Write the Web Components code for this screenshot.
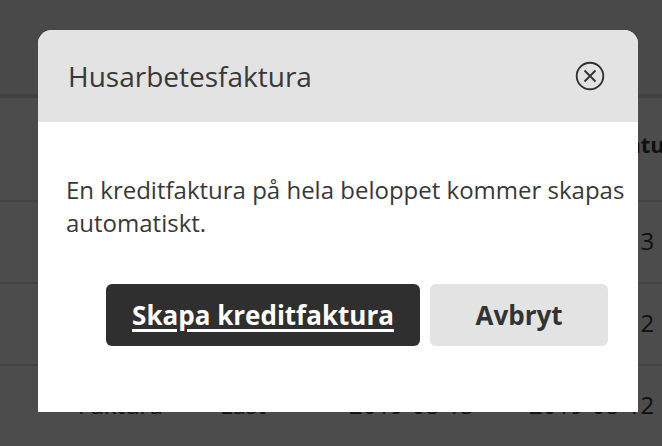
<!DOCTYPE html>
<html lang="sv">
<head>
<meta charset="utf-8">
<title>Husarbetesfaktura</title>
<style>
  html, body { margin: 0; height: 100%; overflow: hidden; background: #fff; }
  body { font-family: "Open Sans", "Noto Sans", sans-serif; color: #383838; }
</style>
</head>
<body>
<x-table>
  <x-row head><span></span><span></span><span></span><span>Förfallodatum</span></x-row>
  <x-row><span>Faktura</span><span>Last</span><span>2019-08-13</span><span>2019-08-13</span></x-row>
  <x-row><span>Faktura</span><span>Last</span><span>2019-08-13</span><span>2019-08-12</span></x-row>
  <x-row><span>Faktura</span><span>Last</span><span>2019-08-13</span><span>2019-08-12</span></x-row>
</x-table>

<x-modal>
  <span slot="title">Husarbetesfaktura</span>
  En kreditfaktura på hela beloppet kommer skapas automatiskt.
  <x-button slot="actions" primary>Skapa kreditfaktura</x-button>
  <x-button slot="actions">Avbryt</x-button>
</x-modal>

<script>
class Table extends HTMLElement {
  constructor() {
    super();
    this.attachShadow({ mode: 'open' });
    this.shadowRoot.innerHTML = `
      <style>
        :host {
          display: block;
          width: 662px;
          overflow: hidden;
        }
        .top {
          height: 94px;
          background: #f4f4f4;
          border-bottom: 4px solid #dcdcdc;
        }
      </style>
      <div class='top'></div>
      <slot></slot>
    `;
  }
}

class Row extends HTMLElement {
  constructor() {
    super();
    this.attachShadow({ mode: 'open' });
    this.shadowRoot.innerHTML = `
      <style>
        :host {
          display: grid;
          grid-template-columns: 142px 129px 180px 180px;
          padding: 0 0 3px 78px;
          box-sizing: border-box;
          width: 740px;
          height: 82px;
          align-items: center;
          border-bottom: 2px solid #e2e2e2;
          font-size: 24px;
          white-space: nowrap;
        }
        :host([head]) {
          height: 104px;
          padding-bottom: 10px;
          font-weight: 700;
          font-size: 22px;
        }
      </style>
      <slot></slot>
    `;
  }
}

class Modal extends HTMLElement {
  constructor() {
    super();
    this.attachShadow({ mode: 'open' });
    this.shadowRoot.innerHTML = `
      <style>
        :host {
          position: fixed;
          inset: 0;
          display: block;
          background: rgba(0, 0, 0, 0.7);
          padding: 30px 24px 0 38px;
        }
        .modal {
          width: 600px;
          height: 382px;
          background: white;
          border-radius: 14px 14px 0 0;
          overflow: hidden;
        }
        header {
          height: 92px;
          background: #e3e3e3;
          display: flex;
          align-items: center;
          justify-content: space-between;
          padding: 0 33px 0 30px;
          font-size: 28px;
          box-sizing: border-box;
        }
        header svg {
          display: block;
          width: 30px;
          height: 30px;
          margin-top: -1px;
        }
        .main {
          margin: 0 12px 0 28px;
          padding-top: 51px;
          font-size: 24px;
          line-height: 33px;
        }
        .actions {
          display: flex;
          gap: 10px;
          justify-content: flex-end;
          padding: 45px 30px 0 0;
        }
      </style>
      <div class='modal'>
        <header>
          <slot name='title'></slot>
          <svg viewBox='0 0 30 30' fill='none' stroke='#333' aria-label='Stäng'>
            <circle cx='15' cy='15' r='13.3' stroke-width='1.9'/>
            <path d='M9.5 9.5 20.5 20.5M20.5 9.5 9.5 20.5' stroke-width='1.9'/>
          </svg>
        </header>
        <section class='main'><slot></slot></section>
        <section class='actions'><slot name='actions'></slot></section>
      </div>
    `;
  }
}

class Button extends HTMLElement {
  constructor() {
    super();
    this.attachShadow({ mode: 'open' });
    this.shadowRoot.innerHTML = `
      <style>
        :host {
          display: flex;
          align-items: center;
          justify-content: center;
          height: 62px;
          width: 178px;
          box-sizing: border-box;
          border-radius: 6px;
          background: #e3e3e3;
          color: #333;
          font-size: 26px;
          font-weight: 700;
          white-space: nowrap;
        }
        :host([primary]) {
          width: 314px;
          background: #2f2f2f;
          color: #fff;
          text-decoration: underline;
          text-decoration-thickness: 3px;
          text-underline-offset: 4px;
        }
      </style>
      <slot></slot>
    `;
  }
}

customElements.define('x-table', Table);
customElements.define('x-row', Row);
customElements.define('x-modal', Modal);
customElements.define('x-button', Button);
</script>
</body>
</html>
